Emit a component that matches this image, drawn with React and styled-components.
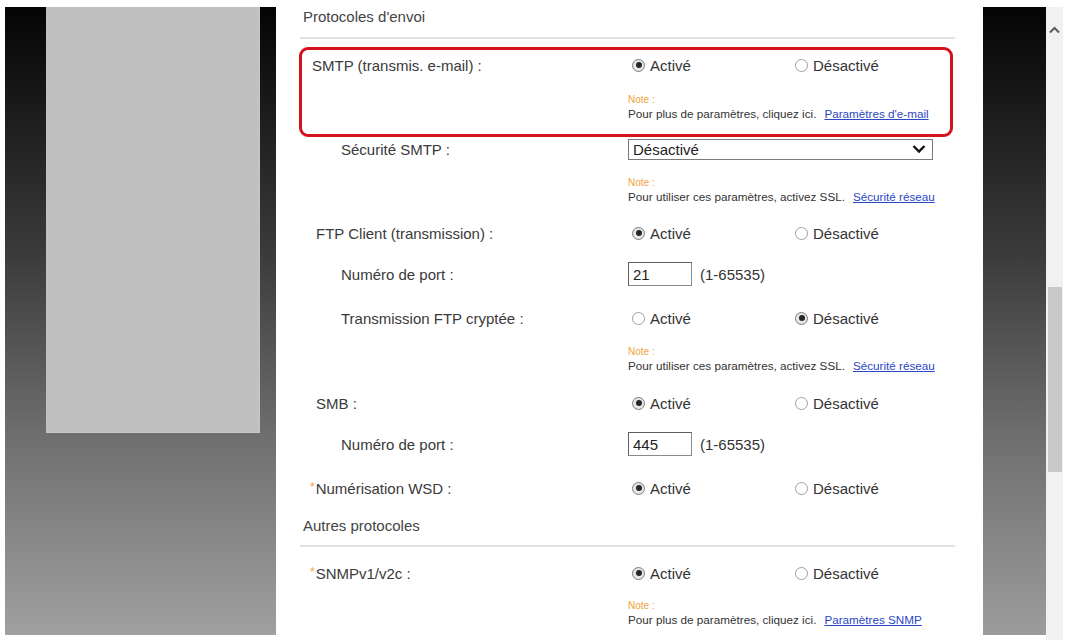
import React from "react";
import styled, { createGlobalStyle } from "styled-components";

const GlobalStyle = createGlobalStyle`
  html, body { margin: 0; padding: 0; background: #ffffff; }
  body { font-family: "Liberation Sans", Arial, sans-serif; color: #3a3a3a; }
  * { box-sizing: border-box; }
`;

const Page = styled.div`
  display: flex;
  align-items: flex-start;
  width: 1068px;
  height: 640px;
  overflow: hidden;
  background: #ffffff;
`;

const LeftColumn = styled.div`
  margin: 7px 0 0 5px;
  width: 271px;
  height: 628px;
  background: linear-gradient(to bottom, #040404 0%, #3c3c3c 40%, #6e6e6e 68%, #a0a0a0 100%);
  padding-left: 41px;
`;

const SideBox = styled.div`
  width: 214px;
  height: 426px;
  background: #c0c0c0;
  border-right: 1px solid #c9c9c9;
  border-bottom: 1px solid #c6c6c6;
`;

const Main = styled.div`
  width: 707px;
  height: 640px;
  padding: 0 28px 0 24px;
  overflow: hidden;
`;

const SectionTitle = styled.div`
  padding: ${(p) => p.$pt}px 0 ${(p) => p.$pb}px 3px;
  line-height: 16px;
  font-size: 15px;
  color: #444;
  border-bottom: 2px solid #e2e2e2;
`;

const Highlight = styled.div`
  margin: 8px 2px 0 -1px;
  border: 3px solid #d4121e;
  border-radius: 9px;
`;

const Row = styled.div`
  display: grid;
  grid-template-columns: ${(p) => p.$lw || 328}px 1fr;
  align-items: center;
  height: ${(p) => p.$h}px;
`;

const Label = styled.div`
  padding-left: ${(p) => p.$indent}px;
  font-size: 15px;
  color: #3a3a3a;
  white-space: nowrap;
`;

const Star = styled.span`
  color: #f2a23a;
  font-size: 12px;
  vertical-align: 3px;
  margin-right: 1px;
`;

const Value = styled.div`
  display: flex;
  align-items: center;
`;

const RadioGroup = styled.div`
  display: flex;
  align-items: center;
  padding-left: 4px;
`;

const RadioOption = styled.label`
  display: flex;
  align-items: center;
  gap: 5px;
  width: ${(p) => p.$w || "auto"};
  font-size: 15px;
  color: #333;
`;

const RadioCircle = styled.span`
  position: relative;
  width: 13px;
  height: 13px;
  border-radius: 50%;
  border: 1px solid ${(p) => (p.$checked ? "#7d7d7d" : "#a0a0a0")};
  background: ${(p) => (p.$checked ? "#e6e6e6" : "#fff")};
  &::after {
    content: "";
    display: ${(p) => (p.$checked ? "block" : "none")};
    position: absolute;
    left: 2.5px;
    top: 2.5px;
    width: 6px;
    height: 6px;
    border-radius: 50%;
    background: #262626;
  }
`;

const Select = styled.div`
  width: 305px;
  height: 21px;
  border: 1px solid #7a7a7a;
  display: flex;
  align-items: center;
  justify-content: space-between;
  padding: 0 6px 0 4px;
  font-size: 15px;
  color: #222;
`;

const Input = styled.div`
  width: 64px;
  height: 24px;
  border: 1px solid #8a8a8a;
  border-top-color: #5e5e5e;
  border-left-color: #5e5e5e;
  display: flex;
  align-items: center;
  padding-left: 4px;
  font-size: 15px;
  color: #222;
`;

const Range = styled.span`
  margin-left: 8px;
  font-size: 15px;
  color: #333;
`;

const NoteBlock = styled.div`
  display: grid;
  grid-template-columns: ${(p) => p.$lw || 328}px 1fr;
  padding: ${(p) => p.$pt}px 0 ${(p) => p.$pb}px 0;
`;

const NoteLabel = styled.div`
  line-height: 14px;
  font-size: 10px;
  color: #f2a23a;
`;

const NoteText = styled.div`
  line-height: 14px;
  font-size: 11.7px;
  color: #333;
  white-space: nowrap;
`;

const NoteLink = styled.a`
  margin-left: 8px;
  color: #2a48c4;
  text-decoration: underline;
`;

const RightColumn = styled.div`
  margin-top: 7px;
  width: 63px;
  height: 628px;
  background: linear-gradient(to bottom, #040404 0%, #3c3c3c 40%, #6e6e6e 68%, #9c9c9c 100%);
`;

const Scrollbar = styled.div`
  margin-top: 7px;
  width: 17px;
  height: 633px;
  background: #f1f1f1;
  display: flex;
  flex-direction: column;
  align-items: center;
`;

const ArrowButton = styled.div`
  height: 46px;
  width: 17px;
  display: flex;
  align-items: center;
  justify-content: center;
`;

const Thumb = styled.div`
  margin-top: 234px;
  width: 14px;
  height: 185px;
  background: #c9c9c9;
`;

const Radios = ({ on }) => (
  <RadioGroup>
    <RadioOption $w="163px">
      <RadioCircle $checked={on} />
      Activé
    </RadioOption>
    <RadioOption>
      <RadioCircle $checked={!on} />
      Désactivé
    </RadioOption>
  </RadioGroup>
);

const Note = ({ pt, pb, lw, text, link }) => (
  <NoteBlock $pt={pt} $pb={pb} $lw={lw}>
    <div />
    <div>
      <NoteLabel>Note :</NoteLabel>
      <NoteText>
        {text}
        <NoteLink>{link}</NoteLink>
      </NoteText>
    </div>
  </NoteBlock>
);

const Chevron = () => (
  <svg width="14" height="10" viewBox="0 0 14 10">
    <polyline points="1.5,2 7,7.5 12.5,2" fill="none" stroke="#111" strokeWidth="2.4" strokeLinejoin="miter" />
  </svg>
);

const UpArrow = () => (
  <svg width="11" height="8" viewBox="0 0 11 8">
    <polyline points="1,6.5 5.5,2 10,6.5" fill="none" stroke="#5a5a5a" strokeWidth="2" />
  </svg>
);

export default function App() {
  return (
    <>
      <GlobalStyle />
      <Page>
        <LeftColumn>
          <SideBox />
        </LeftColumn>
        <Main>
          <SectionTitle $pt={9} $pb={12}>Protocoles d'envoi</SectionTitle>
          <Highlight>
            <Row $h={30} $lw={326}>
              <Label $indent={10}>SMTP (transmis. e-mail) :</Label>
              <Value><Radios on /></Value>
            </Row>
            <Note pt={13} pb={13} lw={326} text="Pour plus de paramètres, cliquez ici." link="Paramètres d'e-mail" />
          </Highlight>
          <Row $h={24}>
            <Label $indent={41}>Sécurité SMTP :</Label>
            <Value>
              <Select>
                Désactivé
                <Chevron />
              </Select>
            </Value>
          </Row>
          <Note pt={15} pb={8} text="Pour utiliser ces paramètres, activez SSL." link="Sécurité réseau" />
          <Row $h={42}>
            <Label $indent={16}>FTP Client (transmission) :</Label>
            <Value><Radios on /></Value>
          </Row>
          <Row $h={40}>
            <Label $indent={41}>Numéro de port :</Label>
            <Value>
              <Input>21</Input>
              <Range>(1-65535)</Range>
            </Value>
          </Row>
          <Row $h={48}>
            <Label $indent={41}>Transmission FTP cryptée :</Label>
            <Value><Radios on={false} /></Value>
          </Row>
          <Note pt={3} pb={9} text="Pour utiliser ces paramètres, activez SSL." link="Sécurité réseau" />
          <Row $h={42}>
            <Label $indent={16}>SMB :</Label>
            <Value><Radios on /></Value>
          </Row>
          <Row $h={40}>
            <Label $indent={41}>Numéro de port :</Label>
            <Value>
              <Input>445</Input>
              <Range>(1-65535)</Range>
            </Value>
          </Row>
          <Row $h={48}>
            <Label $indent={10}><Star>*</Star>Numérisation WSD :</Label>
            <Value><Radios on /></Value>
          </Row>
          <SectionTitle $pt={6} $pb={11}>Autres protocoles</SectionTitle>
          <Row $h={52}>
            <Label $indent={10}><Star>*</Star>SNMPv1/v2c :</Label>
            <Value><Radios on /></Value>
          </Row>
          <Note pt={0} pb={0} text="Pour plus de paramètres, cliquez ici." link="Paramètres SNMP" />
        </Main>
        <RightColumn />
        <Scrollbar>
          <ArrowButton><UpArrow /></ArrowButton>
          <Thumb />
        </Scrollbar>
      </Page>
    </>
  );
}
